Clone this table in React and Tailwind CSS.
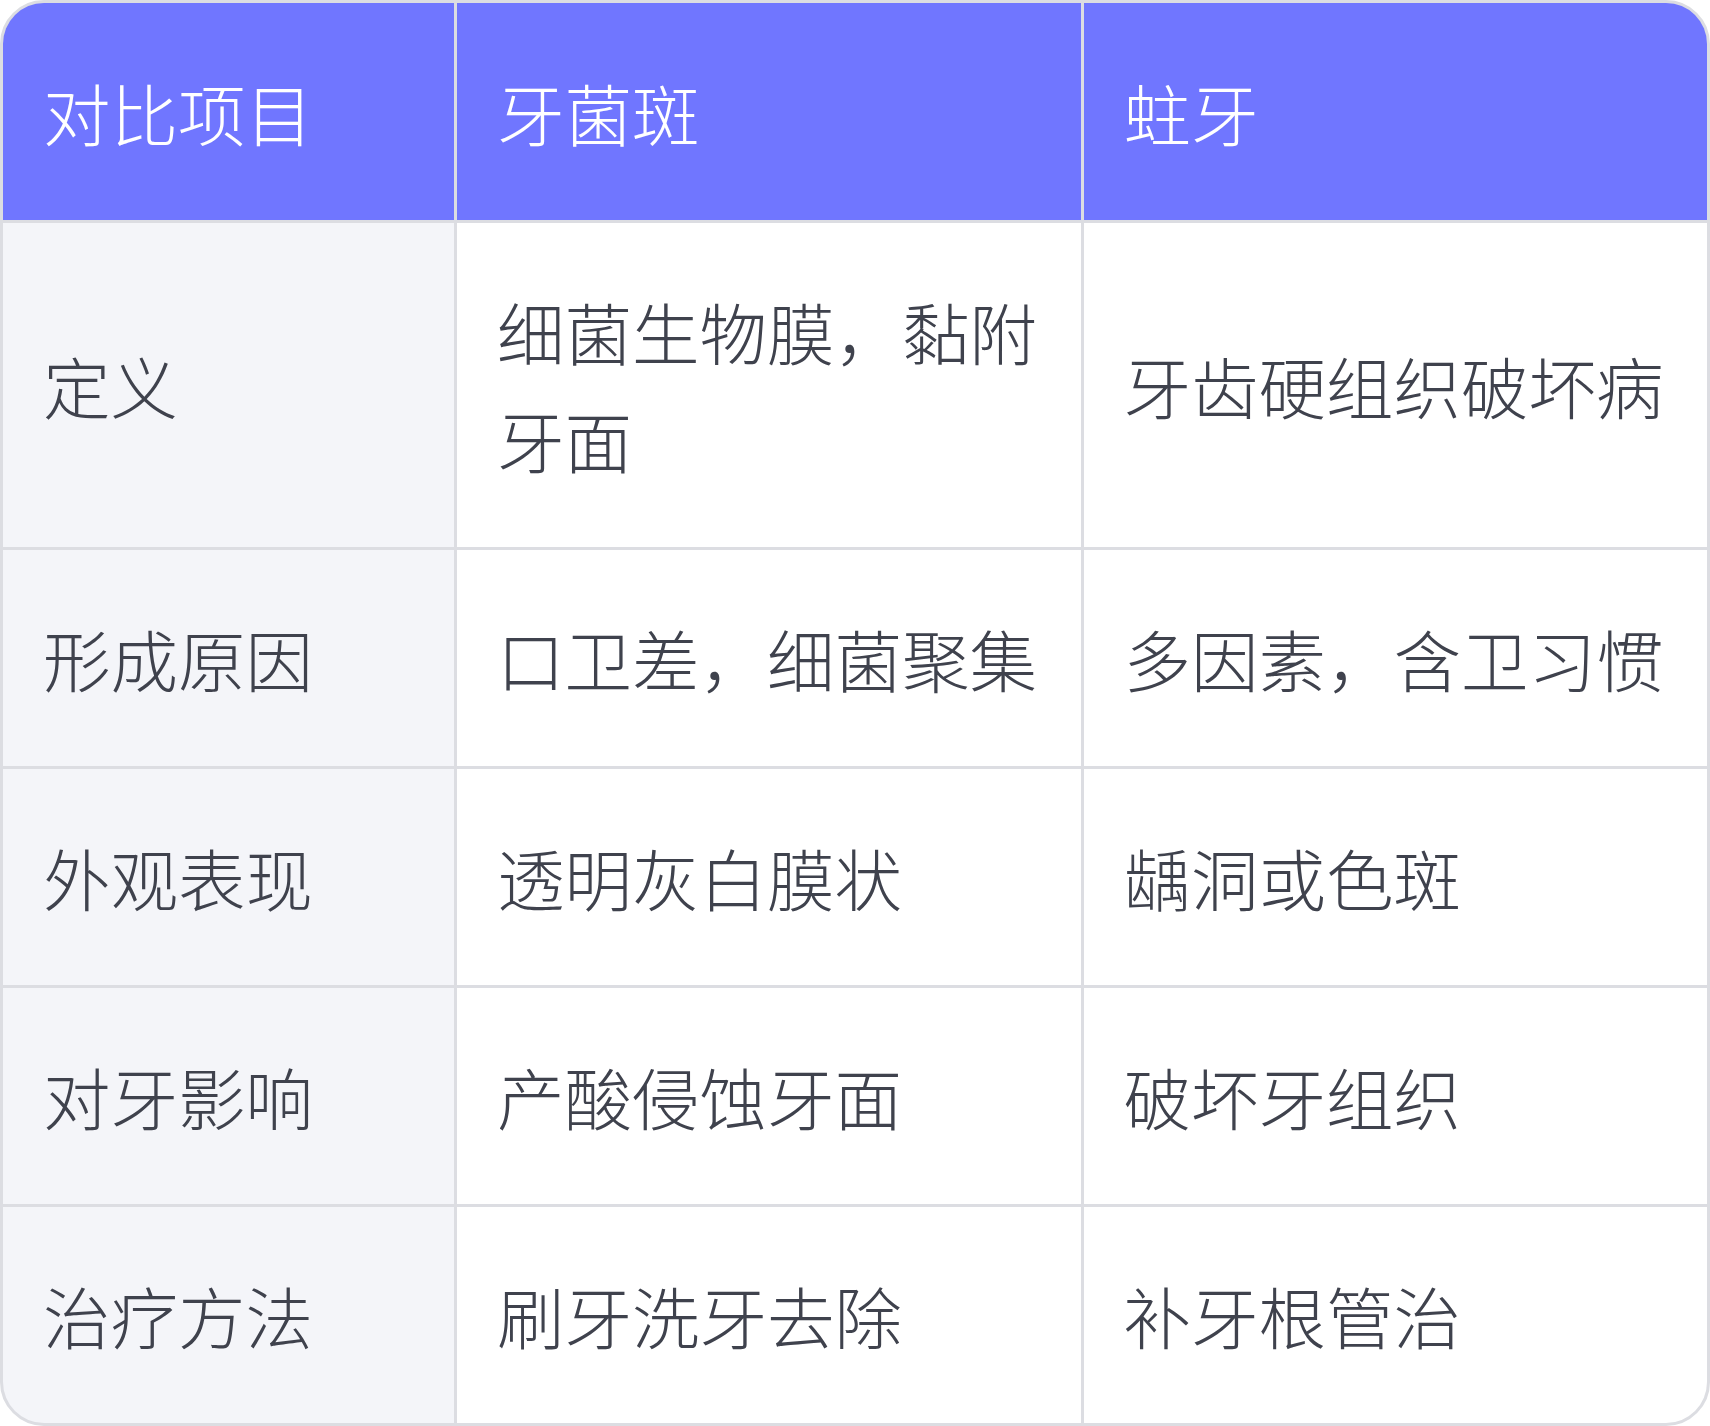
const headers = ['对比项目', '牙菌斑', '蛀牙'];

const rows = [
  ['定义', '细菌生物膜，黏附牙面', '牙齿硬组织破坏病'],
  ['形成原因', '口卫差，细菌聚集', '多因素，含卫习惯'],
  ['外观表现', '透明灰白膜状', '龋洞或色斑'],
  ['对牙影响', '产酸侵蚀牙面', '破坏牙组织'],
  ['治疗方法', '刷牙洗牙去除', '补牙根管治'],
];

const cellClass = 'px-[40px] py-[54px] text-[67.5px] leading-[108px] font-extralight flex items-center';

function App() {
  return (
    <div className="w-[1710px] bg-white" style={{ fontFamily: '"Noto Sans CJK SC", "Noto Sans", sans-serif' }}>
      <div className="overflow-hidden rounded-[44px] border-[3px] border-[#dcdde2] bg-[#dcdde2]">
        <div className="grid grid-cols-[451px_1fr_1fr] gap-[3px]">
          {headers.map((h) => (
            <div key={h} className={`${cellClass} h-[217px] bg-[#7076ff] text-white`}>{h}</div>
          ))}
          {rows.map((r) => r.map((c, i) => (
            <div
              key={`${r[0]}-${i}`}
              className={`${cellClass} text-[#3f424d] ${i === 0 ? 'bg-[#f4f5f9]' : 'bg-white'}`}
            >
              {c}
            </div>
          )))}
        </div>
      </div>
    </div>
  );
}

export default App;
